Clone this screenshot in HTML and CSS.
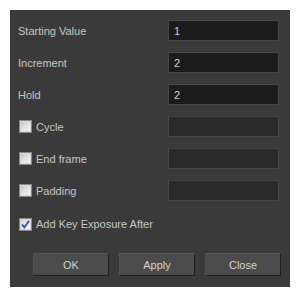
FILE: index.html
```html
<!DOCTYPE html>
<html lang="en">
  <head>
    <meta charset="UTF-8">
    <title>Fill Cells</title>
    <link rel="stylesheet" href="styles.css">
  </head>
  <body>
    <div class="dialog">
      <div class="rows">
        <label class="label">Starting Value</label>
        <div class="field">1</div>

        <label class="label">Increment</label>
        <div class="field">2</div>

        <label class="label">Hold</label>
        <div class="field">2</div>

        <label class="label check-label"><span class="box"></span>Cycle</label>
        <div class="field off"></div>

        <label class="label check-label"><span class="box"></span>End frame</label>
        <div class="field off"></div>

        <label class="label check-label"><span class="box"></span>Padding</label>
        <div class="field off"></div>

        <label class="label check-label wide">
          <span class="box checked">
            <svg width="11" height="11" viewBox="0 0 11 11"><path d="M2 5.5 L4.3 8.5 L9 1.8" fill="none" stroke="#2f4fb8" stroke-width="1.8"/></svg>
          </span>Add Key Exposure After
        </label>
      </div>

      <div class="buttons">
        <div class="btn">OK</div>
        <div class="btn">Apply</div>
        <div class="btn">Close</div>
      </div>
    </div>
  </body>
</html>
```

FILE: styles.css
```css
* {
  box-sizing: border-box;
}

body {
  margin: 10px;
  background: #ffffff;
  font-family: "Liberation Sans", Arial, sans-serif;
  font-size: 11px;
}

.dialog {
  width: 280px;
  height: 277px;
  background: #3a3a3a;
  padding: 10px 11px 0 8px;
  display: flex;
  flex-direction: column;
}

.rows {
  display: grid;
  grid-template-columns: 1fr 111px;
  grid-auto-rows: 21px;
  row-gap: 11px;
}

.label {
  color: #c6c6c6;
  display: flex;
  align-items: center;
}

.check-label {
  padding-left: 1px;
}

.wide {
  grid-column: 1 / 3;
  margin-top: 3px;
}

.box {
  width: 13px;
  height: 13px;
  margin-right: 4px;
  border: 1px solid #8a8a8a;
  background: linear-gradient(135deg, #bdbdbd 0%, #e6e6e6 55%, #fafafa 100%);
  box-shadow: inset 0 0 0 1px #d8d8d8;
  display: flex;
  align-items: center;
  justify-content: center;
}

.box.checked {
  background: linear-gradient(135deg, #d0d0d0 0%, #f0f0f0 60%, #ffffff 100%);
}

.field {
  border: 1px solid #474747;
  background: #1b1b1b;
  color: #d0d0d0;
  padding-left: 5px;
  display: flex;
  align-items: center;
}

.field.off {
  background: #2a2a2a;
}

.buttons {
  margin-top: auto;
  margin-bottom: 11px;
  padding-left: 15px;
  display: flex;
  justify-content: flex-start;
  gap: 10px;
}

.btn {
  flex: none;
  width: 76px;
  height: 23px;
  background: #4b4b4b;
  border-top: 1px solid #585858;
  border-left: 1px solid #555555;
  border-right: 1px solid #1e1e1e;
  border-bottom: 1px solid #1e1e1e;
  color: #d2d2d2;
  display: flex;
  align-items: center;
  justify-content: center;
}
```
